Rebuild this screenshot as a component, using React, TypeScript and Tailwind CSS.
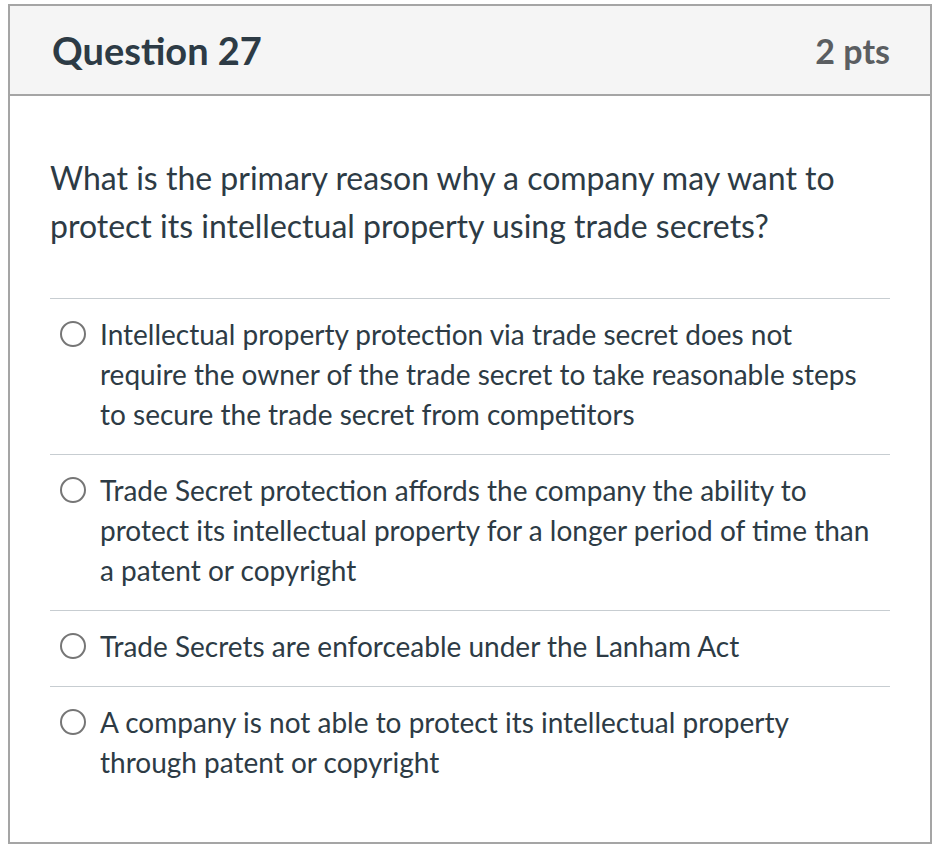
const options = [
  'Intellectual property protection via trade secret does not require the owner of the trade secret to take reasonable steps to secure the trade secret from competitors',
  'Trade Secret protection affords the company the ability to protect its intellectual property for a longer period of time than a patent or copyright',
  'Trade Secrets are enforceable under the Lanham Act',
  'A company is not able to protect its intellectual property through patent or copyright',
]

export default function App() {
  return (
    <div className="min-h-[846px] bg-white pl-2 pt-1 font-['Lato','Noto_Sans',sans-serif] text-[#2d3b45]">
      <div className="w-[924px] h-[840px] border-2 border-[#a5a5a5]">
        <div className="h-[90px] bg-[#f5f5f5] border-b-2 border-[#a5a5a5] flex items-center justify-between pl-[42px] pr-[40px]">
          <h2 className="text-[38px] font-bold">Question 27</h2>
          <div className="text-[34px] font-bold text-[#5b5e61]">2 pts</div>
        </div>
        <div className="px-[40px] pt-[58px]">
          <p className="text-[32px] leading-[48px]">
            What is the primary reason why a company may want to protect its
            intellectual property using trade secrets?
          </p>
          <div className="mt-[48px]">
            {options.map((text) => (
              <label
                key={text}
                className="flex items-start border-t border-[#c7cdd1] pt-[15px] pb-[20px] pr-[12px]"
              >
                <span className="mt-[7px] ml-[10px] mr-[14px] w-[26px] h-[26px] shrink-0 rounded-full border-2 border-[#767676]" />
                <span className="text-[28px] leading-[40px]">{text}</span>
              </label>
            ))}
          </div>
        </div>
      </div>
    </div>
  )
}
